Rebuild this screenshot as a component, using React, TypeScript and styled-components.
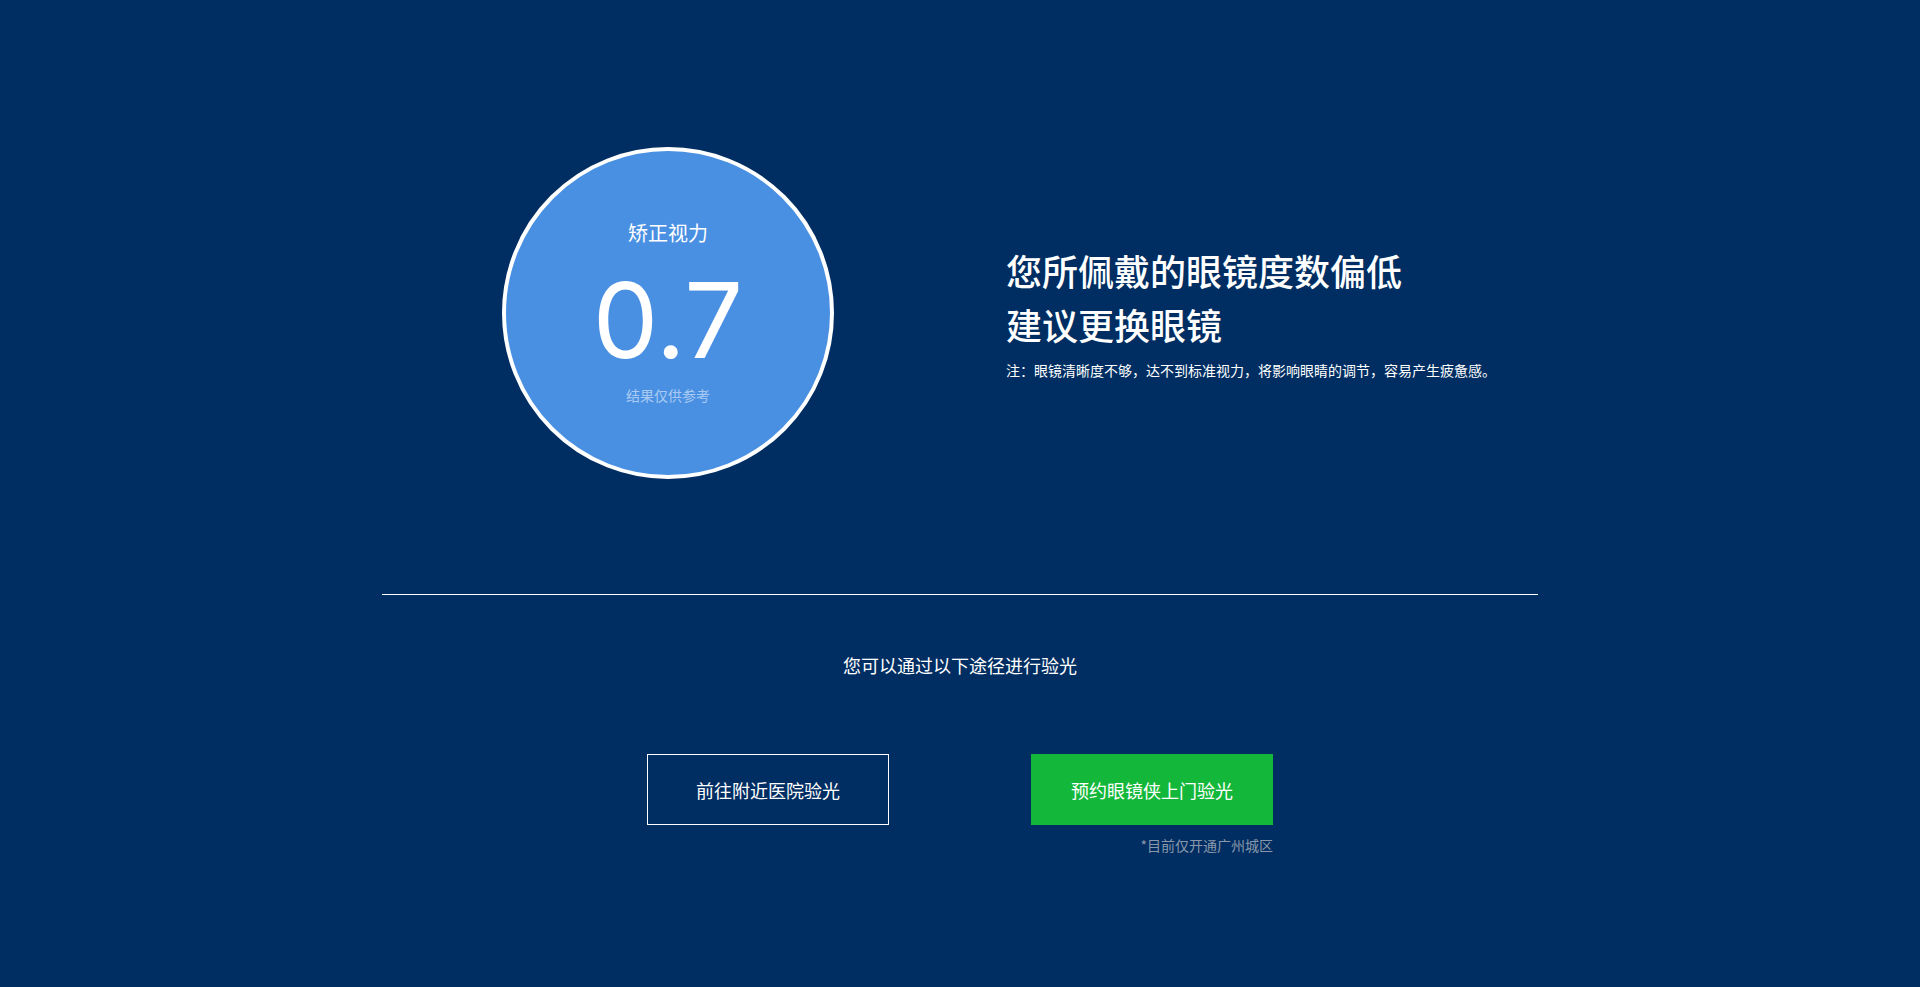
import React from "react";
import styled, { createGlobalStyle } from "styled-components";

const GlobalStyle = createGlobalStyle`
  html, body {
    margin: 0;
    padding: 0;
    background: #002e62;
  }
  body {
    font-family: "Noto Sans CJK SC", "Noto Sans", sans-serif;
    color: #ffffff;
  }
  * { box-sizing: border-box; }
`;

const Page = styled.div`
  min-height: 987px;
  background: #002e62;
  padding-top: 147px;
`;

const Container = styled.div`
  width: 1156px;
  margin: 0 auto;
`;

const ResultRow = styled.section`
  display: flex;
  align-items: center;
  padding-left: 120px;
  gap: 172px;
  padding-bottom: 115px;
`;

const Circle = styled.div`
  width: 332px;
  height: 332px;
  flex: 0 0 332px;
  border-radius: 50%;
  border: 4px solid #ffffff;
  background: #4a90e2;
  display: flex;
  flex-direction: column;
  align-items: center;
  padding-top: 69px;
`;

const CircleLabel = styled.div`
  font-size: 20px;
  line-height: 26px;
  color: #ffffff;
`;

const Score = styled.div`
  font-family: Inter, "Noto Sans", sans-serif;
  font-size: 104px;
  line-height: 104px;
  margin-top: 22px;
  font-weight: 400;
  color: #ffffff;
`;

const CircleNote = styled.div`
  font-size: 14px;
  line-height: 20px;
  margin-top: 13px;
  color: #a9cbf3;
`;

const Verdict = styled.div`
  display: flex;
  flex-direction: column;
  margin-bottom: 3px;
`;

const Title = styled.h1`
  margin: 0;
  font-size: 36px;
  line-height: 54px;
  font-weight: 500;
  color: #ffffff;
`;

const Hint = styled.p`
  margin: 9px 0 0;
  font-size: 14px;
  line-height: 20px;
  color: #ffffff;
`;

const Divider = styled.hr`
  margin: 0;
  border: none;
  height: 1px;
  background: #ffffff;
`;

const Ways = styled.section`
  display: flex;
  flex-direction: column;
  align-items: center;
  padding-top: 58px;
`;

const WaysTitle = styled.div`
  font-size: 18px;
  line-height: 24px;
  color: #ffffff;
`;

const Buttons = styled.div`
  display: flex;
  gap: 142px;
  margin-top: 77px;
`;

const ButtonCol = styled.div`
  display: flex;
  flex-direction: column;
  align-items: flex-end;
`;

const Button = styled.button<{ $primary?: boolean }>`
  width: 242px;
  height: 71px;
  font-family: "Noto Sans CJK SC", "Noto Sans", sans-serif;
  font-size: 18px;
  color: #ffffff;
  cursor: pointer;
  background: ${(p) => (p.$primary ? "#13b83a" : "transparent")};
  border: ${(p) => (p.$primary ? "none" : "1px solid #ffffff")};
  padding: 0;
`;

const AreaNote = styled.div`
  margin-top: 10px;
  font-size: 14px;
  line-height: 20px;
  color: #8b98ab;
`;

export default function App() {
  return (
    <>
      <GlobalStyle />
      <Page>
        <Container>
          <ResultRow>
            <Circle>
              <CircleLabel>矫正视力</CircleLabel>
              <Score>0.7</Score>
              <CircleNote>结果仅供参考</CircleNote>
            </Circle>
            <Verdict>
              <Title>
                您所佩戴的眼镜度数偏低
                <br />
                建议更换眼镜
              </Title>
              <Hint>注：眼镜清晰度不够，达不到标准视力，将影响眼睛的调节，容易产生疲惫感。</Hint>
            </Verdict>
          </ResultRow>
          <Divider />
          <Ways>
            <WaysTitle>您可以通过以下途径进行验光</WaysTitle>
            <Buttons>
              <ButtonCol>
                <Button>前往附近医院验光</Button>
              </ButtonCol>
              <ButtonCol>
                <Button $primary>预约眼镜侠上门验光</Button>
                <AreaNote>*目前仅开通广州城区</AreaNote>
              </ButtonCol>
            </Buttons>
          </Ways>
        </Container>
      </Page>
    </>
  );
}
